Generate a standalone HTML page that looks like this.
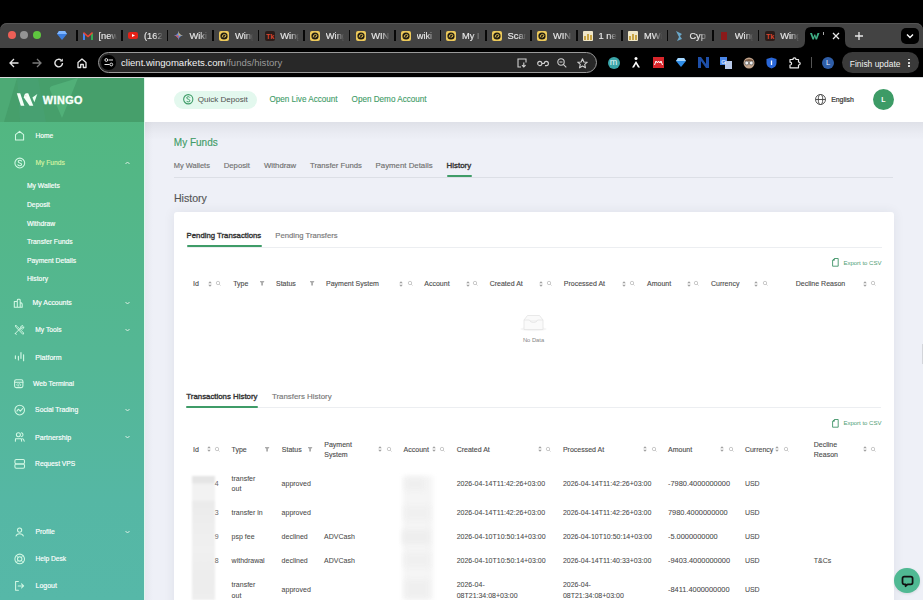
<!DOCTYPE html>
<html><head><meta charset="utf-8"><title>Wingo</title><style>
*{margin:0;padding:0;box-sizing:border-box}
html,body{width:923px;height:600px;overflow:hidden;background:#000;font-family:"Liberation Sans",sans-serif}
.a{position:absolute;white-space:nowrap}
svg.a{overflow:visible}
</style></head><body>
<div class="a" style="left:0px;top:0px;width:923px;height:77px;background:#000"></div>
<div class="a" style="left:0px;top:22.5px;width:923px;height:25.5px;background:#434343;border-radius:7px 7px 0 0;box-shadow:inset 0 1px 0 #555"></div>
<div class="a" style="left:7.9px;top:31.199999999999996px;width:8.2px;height:8.2px;border-radius:50%;background:#ee5f57"></div>
<div class="a" style="left:20.299999999999997px;top:31.199999999999996px;width:8.2px;height:8.2px;border-radius:50%;background:#939393"></div>
<div class="a" style="left:32.9px;top:31.199999999999996px;width:8.2px;height:8.2px;border-radius:50%;background:#5fc63f"></div>
<svg class="a" style="left:57px;top:31px;" width="10" height="9" viewBox="0 0 10 9"><path d="M2 0 L8 0 L10 3 L5 9 L0 3 Z" fill="#3d7fe0"/><path d="M2 0 L8 0 L10 3 L0 3Z" fill="#7fb6ff"/></svg>
<div class="a" style="left:75.9px;top:30.3px;width:1.7px;height:10.6px;background:#080808"></div>
<svg class="a" style="left:82.80000000000001px;top:31.6px;" width="10" height="8" viewBox="0 0 10 8"><path d="M0 1 L0 8 L2 8 L2 3 L5 5.5 L8 3 L8 8 L10 8 L10 1 L9 0 L5 3.5 L1 0Z" fill="#ea4335"/><path d="M0 1 L0 8 L2 8 L2 3Z" fill="#4285f4"/><path d="M10 1 L10 8 L8 8 L8 3Z" fill="#34a853"/></svg>
<div class="a" style="left:98.5px;top:30.8px;width:18.5px;overflow:hidden;font-size:9.3px;line-height:11px;color:#e8e8e8;-webkit-text-stroke:.15px #e8e8e8;-webkit-mask-image:linear-gradient(90deg,#000 55%,transparent 100%)">[new</div>
<div class="a" style="left:121.4px;top:30.3px;width:1.7px;height:10.6px;background:#080808"></div>
<svg class="a" style="left:128.25px;top:32.1px;" width="10" height="7" viewBox="0 0 10 7"><rect width="10" height="7" rx="2" fill="#e62117"/><path d="M4 2 L7 3.5 L4 5Z" fill="#fff"/></svg>
<div class="a" style="left:144.0px;top:30.8px;width:18.5px;overflow:hidden;font-size:9.3px;line-height:11px;color:#e8e8e8;-webkit-text-stroke:.15px #e8e8e8;-webkit-mask-image:linear-gradient(90deg,#000 55%,transparent 100%)">(162</div>
<div class="a" style="left:166.8px;top:30.3px;width:1.7px;height:10.6px;background:#080808"></div>
<svg class="a" style="left:174.20000000000002px;top:31.1px;" width="9" height="9" viewBox="0 0 9 9"><path d="M4.5 0 Q5 4 9 4.5 Q5 5 4.5 9 Q4 5 0 4.5 Q4 4 4.5 0Z" fill="#5b8def"/><path d="M4.5 0 Q5 4 9 4.5 L4.5 4.5Z" fill="#e0b14b"/><path d="M0 4.5 Q4 5 4.5 9 L4.5 4.5Z" fill="#d9544d"/></svg>
<div class="a" style="left:189.4px;top:30.8px;width:18.5px;overflow:hidden;font-size:9.3px;line-height:11px;color:#e8e8e8;-webkit-text-stroke:.15px #e8e8e8;-webkit-mask-image:linear-gradient(90deg,#000 55%,transparent 100%)">Wiki</div>
<div class="a" style="left:212.3px;top:30.3px;width:1.7px;height:10.6px;background:#080808"></div>
<svg class="a" style="left:219.15000000000003px;top:30.6px;" width="10" height="10" viewBox="0 0 10 10"><rect width="10" height="10" rx="2" fill="#ecc95a"/><circle cx="5" cy="5" r="3.6" fill="#1e1a10"/><path d="M3.2 6.3 Q3 3.6 5.4 3.4 Q7 3.4 6.9 4.9 Q6.6 6.4 4.6 6.2" fill="none" stroke="#ecc95a" stroke-width=".9"/></svg>
<div class="a" style="left:234.9px;top:30.8px;width:18.5px;overflow:hidden;font-size:9.3px;line-height:11px;color:#e8e8e8;-webkit-text-stroke:.15px #e8e8e8;-webkit-mask-image:linear-gradient(90deg,#000 55%,transparent 100%)">Wing</div>
<div class="a" style="left:257.7px;top:30.3px;width:1.7px;height:10.6px;background:#080808"></div>
<svg class="a" style="left:264.6px;top:30.6px;" width="10" height="10" viewBox="0 0 10 10"><rect width="10" height="10" rx="2" fill="#2a1d1a"/><text x="1" y="7.8" font-size="7" font-family="Liberation Sans" font-weight="bold" fill="#d9452f">Tk</text></svg>
<div class="a" style="left:280.3px;top:30.8px;width:18.5px;overflow:hidden;font-size:9.3px;line-height:11px;color:#e8e8e8;-webkit-text-stroke:.15px #e8e8e8;-webkit-mask-image:linear-gradient(90deg,#000 55%,transparent 100%)">Wing</div>
<div class="a" style="left:303.1px;top:30.3px;width:1.7px;height:10.6px;background:#080808"></div>
<svg class="a" style="left:310.04999999999995px;top:30.6px;" width="10" height="10" viewBox="0 0 10 10"><rect width="10" height="10" rx="2" fill="#ecc95a"/><circle cx="5" cy="5" r="3.6" fill="#1e1a10"/><path d="M3.2 6.3 Q3 3.6 5.4 3.4 Q7 3.4 6.9 4.9 Q6.6 6.4 4.6 6.2" fill="none" stroke="#ecc95a" stroke-width=".9"/></svg>
<div class="a" style="left:325.8px;top:30.8px;width:18.5px;overflow:hidden;font-size:9.3px;line-height:11px;color:#e8e8e8;-webkit-text-stroke:.15px #e8e8e8;-webkit-mask-image:linear-gradient(90deg,#000 55%,transparent 100%)">Wing</div>
<div class="a" style="left:348.6px;top:30.3px;width:1.7px;height:10.6px;background:#080808"></div>
<svg class="a" style="left:355.5px;top:30.6px;" width="10" height="10" viewBox="0 0 10 10"><rect width="10" height="10" rx="2" fill="#ecc95a"/><circle cx="5" cy="5" r="3.6" fill="#1e1a10"/><path d="M3.2 6.3 Q3 3.6 5.4 3.4 Q7 3.4 6.9 4.9 Q6.6 6.4 4.6 6.2" fill="none" stroke="#ecc95a" stroke-width=".9"/></svg>
<div class="a" style="left:371.2px;top:30.8px;width:18.5px;overflow:hidden;font-size:9.3px;line-height:11px;color:#e8e8e8;-webkit-text-stroke:.15px #e8e8e8;-webkit-mask-image:linear-gradient(90deg,#000 55%,transparent 100%)">WIN</div>
<div class="a" style="left:394.1px;top:30.3px;width:1.7px;height:10.6px;background:#080808"></div>
<svg class="a" style="left:400.95000000000005px;top:30.6px;" width="10" height="10" viewBox="0 0 10 10"><rect width="10" height="10" rx="2" fill="#ecc95a"/><circle cx="5" cy="5" r="3.6" fill="#1e1a10"/><path d="M3.2 6.3 Q3 3.6 5.4 3.4 Q7 3.4 6.9 4.9 Q6.6 6.4 4.6 6.2" fill="none" stroke="#ecc95a" stroke-width=".9"/></svg>
<div class="a" style="left:416.7px;top:30.8px;width:18.5px;overflow:hidden;font-size:9.3px;line-height:11px;color:#e8e8e8;-webkit-text-stroke:.15px #e8e8e8;-webkit-mask-image:linear-gradient(90deg,#000 55%,transparent 100%)">wiki</div>
<div class="a" style="left:439.5px;top:30.3px;width:1.7px;height:10.6px;background:#080808"></div>
<svg class="a" style="left:446.4px;top:30.6px;" width="10" height="10" viewBox="0 0 10 10"><rect width="10" height="10" rx="2" fill="#ecc95a"/><circle cx="5" cy="5" r="3.6" fill="#1e1a10"/><path d="M3.2 6.3 Q3 3.6 5.4 3.4 Q7 3.4 6.9 4.9 Q6.6 6.4 4.6 6.2" fill="none" stroke="#ecc95a" stroke-width=".9"/></svg>
<div class="a" style="left:462.1px;top:30.8px;width:18.5px;overflow:hidden;font-size:9.3px;line-height:11px;color:#e8e8e8;-webkit-text-stroke:.15px #e8e8e8;-webkit-mask-image:linear-gradient(90deg,#000 55%,transparent 100%)">My I</div>
<div class="a" style="left:485.0px;top:30.3px;width:1.7px;height:10.6px;background:#080808"></div>
<svg class="a" style="left:491.85px;top:30.6px;" width="10" height="10" viewBox="0 0 10 10"><rect width="10" height="10" rx="2" fill="#ecc95a"/><circle cx="5" cy="5" r="3.6" fill="#1e1a10"/><path d="M3.2 6.3 Q3 3.6 5.4 3.4 Q7 3.4 6.9 4.9 Q6.6 6.4 4.6 6.2" fill="none" stroke="#ecc95a" stroke-width=".9"/></svg>
<div class="a" style="left:507.6px;top:30.8px;width:18.5px;overflow:hidden;font-size:9.3px;line-height:11px;color:#e8e8e8;-webkit-text-stroke:.15px #e8e8e8;-webkit-mask-image:linear-gradient(90deg,#000 55%,transparent 100%)">Scar</div>
<div class="a" style="left:530.4px;top:30.3px;width:1.7px;height:10.6px;background:#080808"></div>
<svg class="a" style="left:537.3px;top:30.6px;" width="10" height="10" viewBox="0 0 10 10"><rect width="10" height="10" rx="2" fill="#ecc95a"/><circle cx="5" cy="5" r="3.6" fill="#1e1a10"/><path d="M3.2 6.3 Q3 3.6 5.4 3.4 Q7 3.4 6.9 4.9 Q6.6 6.4 4.6 6.2" fill="none" stroke="#ecc95a" stroke-width=".9"/></svg>
<div class="a" style="left:553.0px;top:30.8px;width:18.5px;overflow:hidden;font-size:9.3px;line-height:11px;color:#e8e8e8;-webkit-text-stroke:.15px #e8e8e8;-webkit-mask-image:linear-gradient(90deg,#000 55%,transparent 100%)">WIN</div>
<div class="a" style="left:575.9px;top:30.3px;width:1.7px;height:10.6px;background:#080808"></div>
<svg class="a" style="left:582.75px;top:30.6px;" width="10" height="10" viewBox="0 0 10 10"><rect width="10" height="10" rx="1" fill="#f0e7c8"/><path d="M1 9 L1 5 L3 5 L3 9 M4 9 L4 3 L6 3 L6 9 M7 9 L7 4 L9 4 L9 9" fill="#c9a545"/></svg>
<div class="a" style="left:598.5px;top:30.8px;width:18.5px;overflow:hidden;font-size:9.3px;line-height:11px;color:#e8e8e8;-webkit-text-stroke:.15px #e8e8e8;-webkit-mask-image:linear-gradient(90deg,#000 55%,transparent 100%)">1 ne</div>
<div class="a" style="left:621.3px;top:30.3px;width:1.7px;height:10.6px;background:#080808"></div>
<svg class="a" style="left:628.2px;top:30.6px;" width="10" height="10" viewBox="0 0 10 10"><rect width="10" height="10" rx="1" fill="#f0e7c8"/><path d="M1 9 L1 5 L3 5 L3 9 M4 9 L4 3 L6 3 L6 9 M7 9 L7 4 L9 4 L9 9" fill="#c9a545"/></svg>
<div class="a" style="left:643.9px;top:30.8px;width:18.5px;overflow:hidden;font-size:9.3px;line-height:11px;color:#e8e8e8;-webkit-text-stroke:.15px #e8e8e8;-webkit-mask-image:linear-gradient(90deg,#000 55%,transparent 100%)">MWi</div>
<div class="a" style="left:666.8px;top:30.3px;width:1.7px;height:10.6px;background:#080808"></div>
<svg class="a" style="left:674.65px;top:30.6px;" width="8" height="10" viewBox="0 0 8 10"><path d="M1 0 L7 3 L5 5 L7 8 L2 10 L4 6Z" fill="#6aa7c9"/></svg>
<div class="a" style="left:689.4px;top:30.8px;width:18.5px;overflow:hidden;font-size:9.3px;line-height:11px;color:#e8e8e8;-webkit-text-stroke:.15px #e8e8e8;-webkit-mask-image:linear-gradient(90deg,#000 55%,transparent 100%)">Cyp</div>
<div class="a" style="left:712.2px;top:30.3px;width:1.7px;height:10.6px;background:#080808"></div>
<svg class="a" style="left:720.1px;top:30.6px;" width="8" height="10" viewBox="0 0 8 10"><path d="M1 1 L7 1 L7 9 L1 9Z" fill="#8b1a1a"/></svg>
<div class="a" style="left:734.8px;top:30.8px;width:18.5px;overflow:hidden;font-size:9.3px;line-height:11px;color:#e8e8e8;-webkit-text-stroke:.15px #e8e8e8;-webkit-mask-image:linear-gradient(90deg,#000 55%,transparent 100%)">Wing</div>
<div class="a" style="left:757.6px;top:30.3px;width:1.7px;height:10.6px;background:#080808"></div>
<svg class="a" style="left:764.55px;top:30.6px;" width="10" height="10" viewBox="0 0 10 10"><rect width="10" height="10" rx="2" fill="#2a1d1a"/><text x="1" y="7.8" font-size="7" font-family="Liberation Sans" font-weight="bold" fill="#d9452f">Tk</text></svg>
<div class="a" style="left:780.2px;top:30.8px;width:18.5px;overflow:hidden;font-size:9.3px;line-height:11px;color:#e8e8e8;-webkit-text-stroke:.15px #e8e8e8;-webkit-mask-image:linear-gradient(90deg,#000 55%,transparent 100%)">Wing</div>
<div class="a" style="left:798px;top:27px;width:54px;height:21px;"><svg width="54" height="21" viewBox="0 0 54 21" style="position:absolute;left:0;top:0"><path d="M0 21 Q7 21 7 14 L7 6 Q7 0 13 0 L41 0 Q47 0 47 6 L47 14 Q47 21 54 21Z" fill="#000"/></svg></div>
<svg class="a" style="left:810px;top:33px;" width="9.5" height="6.5" viewBox="0 0 9.5 6.5"><path d="M0 0 L2 0 L3.4 4.2 L4.2 1.6 L5.3 1.6 L6.1 4.2 L7.5 0 L9.5 0 L7 6.5 L5.6 6.5 L4.75 3.6 L3.9 6.5 L2.5 6.5Z" fill="#3fae85"/></svg>
<div class="a" style="left:823px;top:32px;width:1px;height:3px;background:#aaa"></div>
<svg class="a" style="left:832px;top:31.5px;" width="8" height="8" viewBox="0 0 8 8"><path d="M1 1 L7 7 M7 1 L1 7" stroke="#e8e8e8" stroke-width="1.3"/></svg>
<svg class="a" style="left:854px;top:30.5px;" width="10" height="10" viewBox="0 0 10 10"><path d="M5 1 L5 9 M1 5 L9 5" stroke="#e8e8e8" stroke-width="1.3"/></svg>
<div class="a" style="left:901px;top:28px;width:18px;height:16px;background:#000;border-radius:5px"></div>
<svg class="a" style="left:906px;top:33px;" width="8" height="6" viewBox="0 0 8 6"><path d="M1 1.5 L4 4.5 L7 1.5" fill="none" stroke="#fff" stroke-width="1.4"/></svg>
<svg class="a" style="left:9px;top:58px;" width="10" height="10" viewBox="0 0 10 10"><path d="M9.5 5 L1 5 M5 1 L1 5 L5 9" fill="none" stroke="#e6e6e6" stroke-width="1.3"/></svg>
<svg class="a" style="left:32px;top:58px;" width="10" height="10" viewBox="0 0 10 10"><path d="M0.5 5 L9 5 M5 1 L9 5 L5 9" fill="none" stroke="#7a7a7a" stroke-width="1.3"/></svg>
<svg class="a" style="left:54px;top:58px;" width="10" height="10" viewBox="0 0 10 10"><path d="M8.5 5 A3.8 3.8 0 1 1 7.2 2.2" fill="none" stroke="#e6e6e6" stroke-width="1.4"/><path d="M8.8 0.6 L8.8 3.6 L5.8 3.6Z" fill="#e6e6e6"/></svg>
<svg class="a" style="left:77px;top:57.5px;" width="10" height="10" viewBox="0 0 10 10"><path d="M1 9.5 L1 4.5 L5 1 L9 4.5 L9 9.5 L6.3 9.5 L6.3 6.5 L3.7 6.5 L3.7 9.5Z" fill="none" stroke="#e6e6e6" stroke-width="1.3" stroke-linejoin="round"/></svg>
<div class="a" style="left:98px;top:52px;width:499px;height:21px;border:1px solid #9a9a9a;border-radius:11px;background:#282828"></div>
<div class="a" style="left:101.3px;top:55.2px;width:14.4px;height:14.4px;border-radius:50%;background:#000"></div>
<svg class="a" style="left:104px;top:58px;" width="10" height="9" viewBox="0 0 10 9"><circle cx="2.3" cy="2" r="1.4" fill="none" stroke="#e6e6e6" stroke-width="1"/><path d="M4.5 2 L9 2 M0.5 6.5 L5.5 6.5" stroke="#e6e6e6" stroke-width="1"/><circle cx="7.3" cy="6.5" r="1.4" fill="none" stroke="#e6e6e6" stroke-width="1"/></svg>
<div class="a" style="left:121.00px;top:58.12px;font-size:9.55px;line-height:9.55px;color:#f2f2f2;font-weight:normal;"><span style="color:#f2f2f2">client.wingomarkets.com</span><span style="color:#9a9a9a">/funds/history</span></div>
<svg class="a" style="left:517px;top:58px;" width="10" height="10" viewBox="0 0 10 10"><path d="M4 9 L1 9 L1 1 L9 1 L9 4.5" fill="none" stroke="#cfcfcf" stroke-width="1.1"/><path d="M6.8 4.5 L6.8 9 M5 7.2 L6.8 9 L8.6 7.2" fill="none" stroke="#cfcfcf" stroke-width="1.1"/></svg>
<svg class="a" style="left:536.5px;top:59.5px;" width="12" height="7" viewBox="0 0 12 7"><circle cx="2.8" cy="3.5" r="2.1" fill="none" stroke="#cfcfcf" stroke-width="1.1"/><path d="M4.9 3.5 L7.2 3.5 Q7.2 1.4 9.3 1.4 Q11.4 1.4 11.4 3.5 Q11.4 5.6 9.3 5.6 L8 5.6" fill="none" stroke="#cfcfcf" stroke-width="1.1"/></svg>
<svg class="a" style="left:557px;top:58px;" width="10" height="10" viewBox="0 0 10 10"><circle cx="4" cy="4" r="3.2" fill="none" stroke="#cfcfcf" stroke-width="1.1"/><path d="M6.3 6.3 L9.3 9.3 M2.5 4 L5.5 4" stroke="#cfcfcf" stroke-width="1.1"/></svg>
<svg class="a" style="left:577px;top:57.5px;" width="11" height="11" viewBox="0 0 11 11"><path d="M5.5 0.8 L6.9 4 L10.3 4.2 L7.7 6.4 L8.5 9.8 L5.5 8 L2.5 9.8 L3.3 6.4 L0.7 4.2 L4.1 4Z" fill="none" stroke="#cfcfcf" stroke-width="1.1" stroke-linejoin="round"/></svg>
<div class="a" style="left:607.5px;top:56.8px;width:12px;height:12px;border-radius:50%;background:#3aa5a8;color:#e8f6f6;font-size:9px;line-height:11px;text-align:center">m</div>
<svg class="a" style="left:631px;top:57px;" width="10" height="11" viewBox="0 0 10 11"><circle cx="5" cy="1.6" r="1.5" fill="#fff"/><path d="M5 4 L1 10.5 L3 10.5 L5 7 L7 10.5 L9 10.5Z" fill="#fff"/></svg>
<svg class="a" style="left:653px;top:57px;" width="11" height="11" viewBox="0 0 11 11"><rect width="11" height="11" fill="#d8262b"/><path d="M1.5 8 L3 4 L4.5 6 L5.5 4 L7 6 L8 4 L9.5 8" fill="none" stroke="#fff" stroke-width="1"/></svg>
<svg class="a" style="left:676px;top:58px;" width="10" height="9" viewBox="0 0 10 9"><path d="M2 0 L8 0 L10 3 L5 9 L0 3 Z" fill="#2e8ce6"/><path d="M2 0 L8 0 L10 3 L0 3Z" fill="#a6d7ff"/></svg>
<svg class="a" style="left:698px;top:57px;" width="11" height="11" viewBox="0 0 11 11"><path d="M0 11 L0 0 L3 0 L8 7 L8 0 L11 0 L11 11 L8 11 L3 4 L3 11Z" fill="#1e4fa8"/></svg>
<svg class="a" style="left:720px;top:57px;" width="12" height="12" viewBox="0 0 12 12"><rect x="0" y="0" width="7" height="8" fill="#4a86e8"/><rect x="5" y="4" width="7" height="8" fill="#b8c8e8"/><text x="1.3" y="6.5" font-size="6" fill="#fff" font-family="Liberation Sans">G</text></svg>
<svg class="a" style="left:742.5px;top:57px;" width="12" height="12" viewBox="0 0 12 12"><circle cx="6" cy="6" r="5.5" fill="#c2a48c"/><circle cx="3.8" cy="6" r="2" fill="#eee" stroke="#555" stroke-width=".7"/><circle cx="8.2" cy="6" r="2" fill="#eee" stroke="#555" stroke-width=".7"/><path d="M1 4 Q6 0 11 4" fill="#7a5a44"/></svg>
<svg class="a" style="left:765.5px;top:56.5px;" width="11" height="12" viewBox="0 0 11 12"><path d="M5.5 0.5 L10.5 2 L10.5 6 Q10.5 10 5.5 11.5 Q0.5 10 0.5 6 L0.5 2Z" fill="#2a67d8"/><path d="M5.5 3.5 L5.5 8" stroke="#fff" stroke-width="1.3"/></svg>
<svg class="a" style="left:789px;top:57px;" width="12" height="12" viewBox="0 0 12 12"><path d="M1 2.5 L4 2.5 Q4 0.8 5.5 0.8 Q7 0.8 7 2.5 L9.5 2.5 L9.5 5 Q11.2 5 11.2 6.5 Q11.2 8 9.5 8 L9.5 10.8 L1 10.8 L1 8 Q2.6 8 2.6 6.6 Q2.6 5.2 1 5.2Z" fill="none" stroke="#eaeaea" stroke-width="1.2" stroke-linejoin="round"/></svg>
<div class="a" style="left:811px;top:57px;width:1px;height:11px;background:#555"></div>
<div class="a" style="left:822px;top:56.8px;width:12px;height:12px;border-radius:50%;background:#2f5ea8;color:#e8eef8;font-size:7.5px;line-height:12px;text-align:center">L</div>
<div class="a" style="left:842px;top:52.3px;width:77px;height:21px;background:#3a3a3a;border-radius:11px"></div>
<div class="a" style="left:849.80px;top:59.85px;font-size:8.45px;line-height:8.45px;color:#f0f0f0;font-weight:normal;">Finish update</div>
<div class="a" style="left:908.2px;top:58.75px;width:1.7px;height:1.7px;border-radius:50%;background:#eee"></div>
<div class="a" style="left:908.2px;top:61.95px;width:1.7px;height:1.7px;border-radius:50%;background:#eee"></div>
<div class="a" style="left:908.2px;top:65.15px;width:1.7px;height:1.7px;border-radius:50%;background:#eee"></div>
<div class="a" style="left:0px;top:77px;width:923px;height:523px;background:#eef0f7"></div>
<div class="a" style="left:0px;top:77px;width:923px;height:1px;background:#d8dadc"></div>
<div class="a" style="left:0px;top:78px;width:144px;height:522px;background:linear-gradient(180deg,#52b77e 0%,#53b786 20%,#54b795 54%,#55b7a4 81%,#56b8a8 100%)"></div>
<div class="a" style="left:0px;top:78px;width:144px;height:44px;background:#469f6b;overflow:hidden"></div>
<svg class="a" style="left:0px;top:78px;" width="144" height="44" viewBox="0 0 144 44"><path d="M0 0 L17 0 L4 44 L0 44Z" fill="#4fac78" opacity=".8"/><path d="M17 0 L38 0 L46 44 L20 44Z" fill="#48a274" opacity=".6"/><path d="M50 12 Q49 9 52 8 L78 0 L62 40Z" fill="#52b17a" opacity=".9"/></svg>
<svg class="a" style="left:0;top:0" width="60" height="120" viewBox="0 0 60 120"><path d="M16.8 93.3 L20.2 93.3 L24.4 105.7 L20.8 105.7Z" fill="#f4fff8"/><path d="M23.8 97.6 Q24.3 93.3 26.6 93.3 L28.2 93.3 L33.3 105.7 L29.6 105.7Z" fill="#f4fff8"/><path d="M25 95.5 Q25.8 94.5 26.6 95.5 L26.2 97Z" fill="#f0d8d8"/><path d="M32.4 97.4 L37.3 94 L34.4 102.3Z" fill="#e8fff2"/></svg>
<div class="a" style="left:42.80px;top:94.86px;font-size:10.8px;line-height:10.8px;color:#f8fffb;font-weight:bold;-webkit-text-stroke:.35px #f8fffb;letter-spacing:.45px">WINGO</div>
<svg class="a" style="left:0;top:0" width="144" height="600" viewBox="0 0 144 600"><g fill="none" stroke="#d2f8e4" stroke-width="1.05" stroke-linejoin="round" stroke-linecap="round"><path d="M15.5 140 L15.5 134.6 L19.6 131.3 L23.6 134.6 L23.6 140Z"/><circle cx="19.8" cy="163" r="4.9"/><path d="M21.6 161.1 Q21.2 160.2 19.8 160.2 Q18.2 160.2 18.2 161.5 Q18.2 162.5 19.8 162.9 Q21.6 163.3 21.6 164.5 Q21.6 165.8 19.8 165.8 Q18.3 165.8 17.9 164.8"/><path d="M14.3 307.2 L14.3 301.4 L17.3 301.4 L17.3 307.2 M17.3 301.4 L17.3 300.2 Q17.3 299.3 18.3 299.3 L19.2 299.3 Q20.2 299.3 20.2 300.2 L20.2 307.2 M20.2 302.6 Q22.2 302.6 22.2 304.6 L22.2 307.2 L14.3 307.2"/><path d="M15.6 325.8 Q16.8 325.4 17.4 326.6 L23.6 333 Q23.8 334.2 22.8 334.3 L16.6 327.8 Q15.4 327.2 15.6 325.8Z" stroke-width=".95"/><path d="M15.3 333.4 L20.8 327.9 M20.8 327.9 Q20.4 326.2 21.8 325.6 L22.6 325.5 L21.8 326.9 L22.6 327.6 L23.9 326.8 Q24 328.5 22.3 329.2 Q21.6 329.3 20.8 327.9 M15.3 333.4 Q15.3 334.5 16.3 334.4" stroke-width=".95"/><path d="M15.4 355.9 L15.4 358.6 M18.4 356.2 L18.4 360 M23.6 354.8 L23.6 360.8" stroke-width="1.1"/><rect x="20.1" y="352.1" width="1.7" height="7" rx=".8" fill="#a9e3cc" stroke="none"/><rect x="14.6" y="379.7" width="8.3" height="7.9" rx="1.6"/><path d="M14.6 382.3 L22.9 382.3"/><path d="M17.6 383.7 L16.6 384.9 L17.6 386 M19.9 383.7 L20.9 384.9 L19.9 386 M19.2 383.6 L18.4 386.1" stroke-width=".75"/><circle cx="19.7" cy="410.1" r="4.8"/><path d="M16.9 411.1 L18.4 409.2 L20.3 411.2 L22.6 408.6"/><circle cx="18.4" cy="434.7" r="2"/><path d="M21.4 432.8 Q23 433 23 434.7 Q23 436.3 21.6 436.6"/><path d="M15.4 441.3 L15.5 438.7 L21.4 438.7 L21.6 441.3 M22.6 438.7 Q23.6 438.9 24.2 441.2"/><rect x="14.9" y="459.5" width="9.6" height="4.4" rx="1.3"/><rect x="14.9" y="463.9" width="9.6" height="4.4" rx="1.3"/><circle cx="19.6" cy="530.1" r="2.1"/><path d="M16.1 535.9 Q16.6 533.7 19.6 533.7 Q22.6 533.7 23.3 535.9"/><circle cx="19.7" cy="558.9" r="4.8"/><circle cx="19.7" cy="558.9" r="2.2"/><path d="M16.4 555.6 L18.2 557.4 M23 555.6 L21.2 557.4 M16.4 562.2 L18.2 560.4 M23 562.2 L21.2 560.4" stroke-width=".8"/><path d="M18.4 581.4 L15.6 581.4 L15.6 590.2 L18.4 590.2"/><path d="M18.2 585.9 L23.6 585.9 M21.5 583.8 L23.6 585.9 L21.5 588"/></g></svg>
<div class="a" style="left:35.40px;top:133.37px;font-size:6.65px;line-height:6.65px;color:#ffffff;font-weight:normal;-webkit-text-stroke:.15px #fff">Home</div>
<div class="a" style="left:35.40px;top:159.83px;font-size:6.7px;line-height:6.7px;color:#d6f3a2;font-weight:normal;-webkit-text-stroke:.15px #d6f3a2">My Funds</div>
<svg class="a" style="left:124.8px;top:161px;" width="5" height="4" viewBox="0 0 5 4"><path d="M0.5 3 L2.5 1 L4.5 3" fill="none" stroke="#e6f2ea" stroke-width=".9"/></svg>
<div class="a" style="left:27.00px;top:183.49px;font-size:6.75px;line-height:6.75px;color:#ffffff;font-weight:normal;-webkit-text-stroke:.15px #fff">My Wallets</div>
<div class="a" style="left:27.00px;top:202.01px;font-size:6.75px;line-height:6.75px;color:#ffffff;font-weight:normal;-webkit-text-stroke:.15px #fff">Deposit</div>
<div class="a" style="left:27.00px;top:220.53px;font-size:6.75px;line-height:6.75px;color:#ffffff;font-weight:normal;-webkit-text-stroke:.15px #fff">Withdraw</div>
<div class="a" style="left:27.00px;top:239.05px;font-size:6.75px;line-height:6.75px;color:#ffffff;font-weight:normal;-webkit-text-stroke:.15px #fff">Transfer Funds</div>
<div class="a" style="left:27.00px;top:257.57px;font-size:6.75px;line-height:6.75px;color:#ffffff;font-weight:normal;-webkit-text-stroke:.15px #fff">Payment Details</div>
<div class="a" style="left:27.00px;top:276.09px;font-size:6.75px;line-height:6.75px;color:#ffffff;font-weight:normal;-webkit-text-stroke:.15px #fff">History</div>
<div class="a" style="left:32.50px;top:300.32px;font-size:6.95px;line-height:6.95px;color:#ffffff;font-weight:normal;-webkit-text-stroke:.15px #fff">My Accounts</div>
<svg class="a" style="left:124.8px;top:301px;" width="5" height="4" viewBox="0 0 5 4"><path d="M0.5 1 L2.5 3 L4.5 1" fill="none" stroke="#e6f2ea" stroke-width=".9"/></svg>
<div class="a" style="left:35.30px;top:327.13px;font-size:6.7px;line-height:6.7px;color:#ffffff;font-weight:normal;-webkit-text-stroke:.15px #fff">My Tools</div>
<svg class="a" style="left:124.8px;top:328px;" width="5" height="4" viewBox="0 0 5 4"><path d="M0.5 1 L2.5 3 L4.5 1" fill="none" stroke="#e6f2ea" stroke-width=".9"/></svg>
<div class="a" style="left:35.30px;top:353.83px;font-size:7.05px;line-height:7.05px;color:#ffffff;font-weight:normal;-webkit-text-stroke:.15px #fff">Platform</div>
<div class="a" style="left:33.00px;top:381.09px;font-size:6.75px;line-height:6.75px;color:#ffffff;font-weight:normal;-webkit-text-stroke:.15px #fff">Web Terminal</div>
<div class="a" style="left:35.10px;top:407.34px;font-size:6.8px;line-height:6.8px;color:#ffffff;font-weight:normal;-webkit-text-stroke:.15px #fff">Social Trading</div>
<svg class="a" style="left:124.8px;top:408px;" width="5" height="4" viewBox="0 0 5 4"><path d="M0.5 1 L2.5 3 L4.5 1" fill="none" stroke="#e6f2ea" stroke-width=".9"/></svg>
<div class="a" style="left:35.10px;top:434.03px;font-size:7.05px;line-height:7.05px;color:#ffffff;font-weight:normal;-webkit-text-stroke:.15px #fff">Partnership</div>
<svg class="a" style="left:124.8px;top:435px;" width="5" height="4" viewBox="0 0 5 4"><path d="M0.5 1 L2.5 3 L4.5 1" fill="none" stroke="#e6f2ea" stroke-width=".9"/></svg>
<div class="a" style="left:35.10px;top:460.93px;font-size:6.7px;line-height:6.7px;color:#ffffff;font-weight:normal;-webkit-text-stroke:.15px #fff">Request VPS</div>
<div class="a" style="left:35.50px;top:529.09px;font-size:6.75px;line-height:6.75px;color:#ffffff;font-weight:normal;-webkit-text-stroke:.15px #fff">Profile</div>
<svg class="a" style="left:124.8px;top:530px;" width="5" height="4" viewBox="0 0 5 4"><path d="M0.5 1 L2.5 3 L4.5 1" fill="none" stroke="#e6f2ea" stroke-width=".9"/></svg>
<div class="a" style="left:35.50px;top:556.07px;font-size:6.65px;line-height:6.65px;color:#ffffff;font-weight:normal;-webkit-text-stroke:.15px #fff">Help Desk</div>
<div class="a" style="left:35.50px;top:582.27px;font-size:7.0px;line-height:7.0px;color:#ffffff;font-weight:normal;-webkit-text-stroke:.15px #fff">Logout</div>
<div class="a" style="left:144px;top:122px;width:779px;height:18px;background:linear-gradient(180deg,rgba(30,30,40,.075) 0%,rgba(30,30,40,.05) 25%,rgba(30,30,40,.02) 65%,rgba(30,30,40,0) 100%)"></div>
<div class="a" style="left:144px;top:78px;width:779px;height:44px;background:#fff"></div>
<div class="a" style="left:144px;top:78px;width:1.2px;height:522px;background:rgba(222,246,236,.95)"></div>
<div class="a" style="left:145.2px;top:122px;width:8px;height:478px;background:linear-gradient(90deg,rgba(30,30,50,.04),rgba(30,30,50,0))"></div>
<div class="a" style="left:174px;top:91px;width:83px;height:17.5px;background:#e3f8ee;border-radius:9px"></div>
<svg class="a" style="left:182.8px;top:94px;" width="10.5" height="10.5" viewBox="0 0 10.5 10.5"><circle cx="5.25" cy="5.25" r="4.6" fill="none" stroke="#3f9c68" stroke-width="1.1"/><path d="M6.9 3.6 Q6.5 2.7 5.25 2.7 Q3.7 2.7 3.7 3.9 Q3.7 4.8 5.25 5.2 Q6.9 5.6 6.9 6.8 Q6.9 7.9 5.25 7.9 Q3.9 7.9 3.5 6.9" fill="none" stroke="#3f9c68" stroke-width="1"/></svg>
<div class="a" style="left:197.70px;top:96.19px;font-size:8.05px;line-height:8.05px;color:#505050;font-weight:normal;">Quick Deposit</div>
<div class="a" style="left:269.40px;top:96.10px;font-size:8.15px;line-height:8.15px;color:#3f9c68;font-weight:normal;-webkit-text-stroke:.12px #3f9c68">Open Live Account</div>
<div class="a" style="left:351.60px;top:96.10px;font-size:8.15px;line-height:8.15px;color:#3f9c68;font-weight:normal;-webkit-text-stroke:.12px #3f9c68">Open Demo Account</div>
<svg class="a" style="left:815.3px;top:94px;" width="11" height="11" viewBox="0 0 11 11"><circle cx="5.5" cy="5.5" r="5" fill="none" stroke="#444" stroke-width=".9"/><ellipse cx="5.5" cy="5.5" rx="2.2" ry="5" fill="none" stroke="#444" stroke-width=".9"/><path d="M0.5 5.5 L10.5 5.5" stroke="#444" stroke-width=".9"/></svg>
<div class="a" style="left:831.20px;top:97.16px;font-size:6.9px;line-height:6.9px;color:#333;font-weight:normal;-webkit-text-stroke:.2px #333">English</div>
<div class="a" style="left:873px;top:89.2px;width:21px;height:21px;border-radius:50%;background:#3d9b66;color:#fff;font-size:7px;line-height:21px;text-align:center;font-weight:bold">L</div>
<div class="a" style="left:173.80px;top:137.73px;font-size:10.0px;line-height:10.0px;color:#3f9c68;font-weight:normal;-webkit-text-stroke:.15px #3f9c68">My Funds</div>
<div class="a" style="left:174px;top:177px;width:719px;height:1px;background:#dcdfe6"></div>
<div class="a" style="left:173.80px;top:162.00px;font-size:7.44px;line-height:7.44px;color:#707070;font-weight:normal;-webkit-text-stroke:.15px #707070">My Wallets</div>
<div class="a" style="left:223.70px;top:161.73px;font-size:7.76px;line-height:7.76px;color:#707070;font-weight:normal;-webkit-text-stroke:.15px #707070">Deposit</div>
<div class="a" style="left:263.90px;top:161.74px;font-size:7.75px;line-height:7.75px;color:#707070;font-weight:normal;-webkit-text-stroke:.15px #707070">Withdraw</div>
<div class="a" style="left:310.10px;top:161.78px;font-size:7.7px;line-height:7.7px;color:#707070;font-weight:normal;-webkit-text-stroke:.15px #707070">Transfer Funds</div>
<div class="a" style="left:375.60px;top:161.67px;font-size:7.83px;line-height:7.83px;color:#707070;font-weight:normal;-webkit-text-stroke:.15px #707070">Payment Details</div>
<div class="a" style="left:446.60px;top:161.61px;font-size:7.9px;line-height:7.9px;color:#333;font-weight:normal;-webkit-text-stroke:.35px #333">History</div>
<div class="a" style="left:446.6px;top:174.6px;width:25px;height:2.2px;background:#3f9c68;border-radius:1px"></div>
<div class="a" style="left:173.90px;top:193.43px;font-size:10.6px;line-height:10.6px;color:#555;font-weight:normal;-webkit-text-stroke:.15px #555">History</div>
<div class="a" style="left:173.5px;top:212.3px;width:720.5px;height:400px;background:#fff;border-radius:3px;box-shadow:0 0 12px rgba(40,45,60,.08)"></div>
<div class="a" style="left:186.6px;top:246.8px;width:695px;height:1px;background:#eceef1"></div>
<div class="a" style="left:186.60px;top:232.04px;font-size:7.75px;line-height:7.75px;color:#333;font-weight:normal;-webkit-text-stroke:.35px #333">Pending Transactions</div>
<div class="a" style="left:275.30px;top:232.08px;font-size:7.7px;line-height:7.7px;color:#777;font-weight:normal;-webkit-text-stroke:.15px #777">Pending Transfers</div>
<div class="a" style="left:186.6px;top:245.2px;width:75px;height:2.2px;background:#3f9c68;border-radius:1px"></div>
<svg class="a" style="left:832.3px;top:258.4px;" width="7" height="9" viewBox="0 0 7 9"><path d="M2.4 0.5 L6.2 0.5 L6.2 8.2 L0.6 8.2 L0.6 2.3Z" fill="none" stroke="#3f9468" stroke-width=".9" stroke-linejoin="round"/><path d="M0.6 2.3 L2.4 2.3 L2.4 0.5" fill="#3f9468" stroke="#3f9468" stroke-width=".7"/></svg>
<div class="a" style="left:843.40px;top:259.62px;font-size:6.0px;line-height:6.0px;color:#4f9d74;font-weight:normal;">Export to CSV</div>
<div class="a" style="left:193.00px;top:280.37px;font-size:7.0px;line-height:7.0px;color:#4d4d4d;font-weight:normal;-webkit-text-stroke:.12px #4d4d4d">Id</div>
<svg class="a" style="left:208.4px;top:280.5px;" width="4" height="6.4" viewBox="0 0 4 6.4"><path d="M0.2 2.3 L2 0.2 L3.8 2.3Z M0.2 3.7 L2 5.8 L3.8 3.7Z" fill="#a0a0a0"/></svg>
<svg class="a" style="left:216.20000000000002px;top:280.8px;" width="5" height="5" viewBox="0 0 5 5"><circle cx="2" cy="2" r="1.7" fill="none" stroke="#bdbdbd" stroke-width=".8"/><path d="M3.2 3.2 L4.5 4.5" stroke="#bdbdbd" stroke-width=".8"/></svg>
<div class="a" style="left:233.20px;top:280.37px;font-size:7.0px;line-height:7.0px;color:#4d4d4d;font-weight:normal;-webkit-text-stroke:.12px #4d4d4d">Type</div>
<svg class="a" style="left:259.7px;top:280.90000000000003px;" width="4.2" height="4.6" viewBox="0 0 4.2 4.6"><path d="M0 0 L4.2 0 L4.2 0.8 L3 2 L3 4.4 L1.2 4.4 L1.2 2 L0 0.8Z" fill="#acacac"/></svg>
<div class="a" style="left:276.00px;top:280.37px;font-size:7.0px;line-height:7.0px;color:#4d4d4d;font-weight:normal;-webkit-text-stroke:.12px #4d4d4d">Status</div>
<svg class="a" style="left:309.9px;top:280.90000000000003px;" width="4.2" height="4.6" viewBox="0 0 4.2 4.6"><path d="M0 0 L4.2 0 L4.2 0.8 L3 2 L3 4.4 L1.2 4.4 L1.2 2 L0 0.8Z" fill="#acacac"/></svg>
<div class="a" style="left:326.00px;top:280.37px;font-size:7.0px;line-height:7.0px;color:#4d4d4d;font-weight:normal;-webkit-text-stroke:.12px #4d4d4d">Payment System</div>
<svg class="a" style="left:399.3px;top:280.5px;" width="4" height="6.4" viewBox="0 0 4 6.4"><path d="M0.2 2.3 L2 0.2 L3.8 2.3Z M0.2 3.7 L2 5.8 L3.8 3.7Z" fill="#a0a0a0"/></svg>
<svg class="a" style="left:407.7px;top:280.8px;" width="5" height="5" viewBox="0 0 5 5"><circle cx="2" cy="2" r="1.7" fill="none" stroke="#bdbdbd" stroke-width=".8"/><path d="M3.2 3.2 L4.5 4.5" stroke="#bdbdbd" stroke-width=".8"/></svg>
<div class="a" style="left:424.30px;top:280.37px;font-size:7.0px;line-height:7.0px;color:#4d4d4d;font-weight:normal;-webkit-text-stroke:.12px #4d4d4d">Account</div>
<svg class="a" style="left:465.7px;top:280.5px;" width="4" height="6.4" viewBox="0 0 4 6.4"><path d="M0.2 2.3 L2 0.2 L3.8 2.3Z M0.2 3.7 L2 5.8 L3.8 3.7Z" fill="#a0a0a0"/></svg>
<svg class="a" style="left:473.3px;top:280.8px;" width="5" height="5" viewBox="0 0 5 5"><circle cx="2" cy="2" r="1.7" fill="none" stroke="#bdbdbd" stroke-width=".8"/><path d="M3.2 3.2 L4.5 4.5" stroke="#bdbdbd" stroke-width=".8"/></svg>
<div class="a" style="left:489.70px;top:280.37px;font-size:7.0px;line-height:7.0px;color:#4d4d4d;font-weight:normal;-webkit-text-stroke:.12px #4d4d4d">Created At</div>
<svg class="a" style="left:539.2px;top:280.5px;" width="4" height="6.4" viewBox="0 0 4 6.4"><path d="M0.2 2.3 L2 0.2 L3.8 2.3Z M0.2 3.7 L2 5.8 L3.8 3.7Z" fill="#a0a0a0"/></svg>
<svg class="a" style="left:547.3px;top:280.8px;" width="5" height="5" viewBox="0 0 5 5"><circle cx="2" cy="2" r="1.7" fill="none" stroke="#bdbdbd" stroke-width=".8"/><path d="M3.2 3.2 L4.5 4.5" stroke="#bdbdbd" stroke-width=".8"/></svg>
<div class="a" style="left:563.80px;top:280.37px;font-size:7.0px;line-height:7.0px;color:#4d4d4d;font-weight:normal;-webkit-text-stroke:.12px #4d4d4d">Processed At</div>
<svg class="a" style="left:622.3px;top:280.5px;" width="4" height="6.4" viewBox="0 0 4 6.4"><path d="M0.2 2.3 L2 0.2 L3.8 2.3Z M0.2 3.7 L2 5.8 L3.8 3.7Z" fill="#a0a0a0"/></svg>
<svg class="a" style="left:630.4px;top:280.8px;" width="5" height="5" viewBox="0 0 5 5"><circle cx="2" cy="2" r="1.7" fill="none" stroke="#bdbdbd" stroke-width=".8"/><path d="M3.2 3.2 L4.5 4.5" stroke="#bdbdbd" stroke-width=".8"/></svg>
<div class="a" style="left:647.00px;top:280.37px;font-size:7.0px;line-height:7.0px;color:#4d4d4d;font-weight:normal;-webkit-text-stroke:.12px #4d4d4d">Amount</div>
<svg class="a" style="left:686.5px;top:280.5px;" width="4" height="6.4" viewBox="0 0 4 6.4"><path d="M0.2 2.3 L2 0.2 L3.8 2.3Z M0.2 3.7 L2 5.8 L3.8 3.7Z" fill="#a0a0a0"/></svg>
<svg class="a" style="left:694.0999999999999px;top:280.8px;" width="5" height="5" viewBox="0 0 5 5"><circle cx="2" cy="2" r="1.7" fill="none" stroke="#bdbdbd" stroke-width=".8"/><path d="M3.2 3.2 L4.5 4.5" stroke="#bdbdbd" stroke-width=".8"/></svg>
<div class="a" style="left:711.00px;top:280.37px;font-size:7.0px;line-height:7.0px;color:#4d4d4d;font-weight:normal;-webkit-text-stroke:.12px #4d4d4d">Currency</div>
<svg class="a" style="left:754.3px;top:280.5px;" width="4" height="6.4" viewBox="0 0 4 6.4"><path d="M0.2 2.3 L2 0.2 L3.8 2.3Z M0.2 3.7 L2 5.8 L3.8 3.7Z" fill="#a0a0a0"/></svg>
<svg class="a" style="left:762.5999999999999px;top:280.8px;" width="5" height="5" viewBox="0 0 5 5"><circle cx="2" cy="2" r="1.7" fill="none" stroke="#bdbdbd" stroke-width=".8"/><path d="M3.2 3.2 L4.5 4.5" stroke="#bdbdbd" stroke-width=".8"/></svg>
<div class="a" style="left:795.80px;top:280.37px;font-size:7.0px;line-height:7.0px;color:#4d4d4d;font-weight:normal;-webkit-text-stroke:.12px #4d4d4d">Decline Reason</div>
<svg class="a" style="left:863.4px;top:280.5px;" width="4" height="6.4" viewBox="0 0 4 6.4"><path d="M0.2 2.3 L2 0.2 L3.8 2.3Z M0.2 3.7 L2 5.8 L3.8 3.7Z" fill="#a0a0a0"/></svg>
<svg class="a" style="left:871.0px;top:280.8px;" width="5" height="5" viewBox="0 0 5 5"><circle cx="2" cy="2" r="1.7" fill="none" stroke="#bdbdbd" stroke-width=".8"/><path d="M3.2 3.2 L4.5 4.5" stroke="#bdbdbd" stroke-width=".8"/></svg>
<svg class="a" style="left:519px;top:313px;" width="29" height="19" viewBox="0 0 29 19"><ellipse cx="14.5" cy="16" rx="13" ry="2.2" fill="#f5f5f5"/><path d="M5 7 L8.5 2.5 L20.5 2.5 L24 7 L24 16.5 L5 16.5Z" fill="#fafafa" stroke="#e3e3e3" stroke-width=".8"/><path d="M5 7 L10.5 7 Q11 9.5 14.5 9.5 Q18 9.5 18.5 7 L24 7" fill="#f3f3f3" stroke="#e3e3e3" stroke-width=".8"/></svg>
<div class="a" style="left:522.90px;top:337.68px;font-size:5.81px;line-height:5.81px;color:#858585;font-weight:normal;">No Data</div>
<div class="a" style="left:186.3px;top:407.4px;width:695px;height:1px;background:#eceef1"></div>
<div class="a" style="left:186.30px;top:392.85px;font-size:7.85px;line-height:7.85px;color:#333;font-weight:normal;-webkit-text-stroke:.35px #333">Transactions History</div>
<div class="a" style="left:271.90px;top:392.81px;font-size:7.9px;line-height:7.9px;color:#777;font-weight:normal;-webkit-text-stroke:.15px #777">Transfers History</div>
<div class="a" style="left:186.3px;top:405.8px;width:72px;height:2.2px;background:#3f9c68;border-radius:1px"></div>
<svg class="a" style="left:832.3px;top:418.9px;" width="7" height="9" viewBox="0 0 7 9"><path d="M2.4 0.5 L6.2 0.5 L6.2 8.2 L0.6 8.2 L0.6 2.3Z" fill="none" stroke="#3f9468" stroke-width=".9" stroke-linejoin="round"/><path d="M0.6 2.3 L2.4 2.3 L2.4 0.5" fill="#3f9468" stroke="#3f9468" stroke-width=".7"/></svg>
<div class="a" style="left:843.40px;top:420.12px;font-size:6.0px;line-height:6.0px;color:#4f9d74;font-weight:normal;">Export to CSV</div>
<div class="a" style="left:193.00px;top:446.07px;font-size:7.0px;line-height:7.0px;color:#4d4d4d;font-weight:normal;-webkit-text-stroke:.12px #4d4d4d">Id</div>
<svg class="a" style="left:206.5px;top:446.2px;" width="4" height="6.4" viewBox="0 0 4 6.4"><path d="M0.2 2.3 L2 0.2 L3.8 2.3Z M0.2 3.7 L2 5.8 L3.8 3.7Z" fill="#a0a0a0"/></svg>
<svg class="a" style="left:214.70000000000002px;top:446.5px;" width="5" height="5" viewBox="0 0 5 5"><circle cx="2" cy="2" r="1.7" fill="none" stroke="#bdbdbd" stroke-width=".8"/><path d="M3.2 3.2 L4.5 4.5" stroke="#bdbdbd" stroke-width=".8"/></svg>
<div class="a" style="left:231.50px;top:446.07px;font-size:7.0px;line-height:7.0px;color:#4d4d4d;font-weight:normal;-webkit-text-stroke:.12px #4d4d4d">Type</div>
<svg class="a" style="left:265.2px;top:446.6px;" width="4.2" height="4.6" viewBox="0 0 4.2 4.6"><path d="M0 0 L4.2 0 L4.2 0.8 L3 2 L3 4.4 L1.2 4.4 L1.2 2 L0 0.8Z" fill="#acacac"/></svg>
<div class="a" style="left:281.80px;top:446.07px;font-size:7.0px;line-height:7.0px;color:#4d4d4d;font-weight:normal;-webkit-text-stroke:.12px #4d4d4d">Status</div>
<svg class="a" style="left:308.09999999999997px;top:446.6px;" width="4.2" height="4.6" viewBox="0 0 4.2 4.6"><path d="M0 0 L4.2 0 L4.2 0.8 L3 2 L3 4.4 L1.2 4.4 L1.2 2 L0 0.8Z" fill="#acacac"/></svg>
<div class="a" style="left:324.30px;top:440.87px;font-size:7.0px;line-height:7.0px;color:#4d4d4d;font-weight:normal;-webkit-text-stroke:.12px #4d4d4d">Payment</div>
<div class="a" style="left:324.30px;top:451.37px;font-size:7.0px;line-height:7.0px;color:#4d4d4d;font-weight:normal;-webkit-text-stroke:.12px #4d4d4d">System</div>
<svg class="a" style="left:378.2px;top:446.2px;" width="4" height="6.4" viewBox="0 0 4 6.4"><path d="M0.2 2.3 L2 0.2 L3.8 2.3Z M0.2 3.7 L2 5.8 L3.8 3.7Z" fill="#a0a0a0"/></svg>
<svg class="a" style="left:387.1px;top:446.5px;" width="5" height="5" viewBox="0 0 5 5"><circle cx="2" cy="2" r="1.7" fill="none" stroke="#bdbdbd" stroke-width=".8"/><path d="M3.2 3.2 L4.5 4.5" stroke="#bdbdbd" stroke-width=".8"/></svg>
<div class="a" style="left:403.60px;top:446.07px;font-size:7.0px;line-height:7.0px;color:#4d4d4d;font-weight:normal;-webkit-text-stroke:.12px #4d4d4d">Account</div>
<svg class="a" style="left:432.2px;top:446.2px;" width="4" height="6.4" viewBox="0 0 4 6.4"><path d="M0.2 2.3 L2 0.2 L3.8 2.3Z M0.2 3.7 L2 5.8 L3.8 3.7Z" fill="#a0a0a0"/></svg>
<svg class="a" style="left:440.2px;top:446.5px;" width="5" height="5" viewBox="0 0 5 5"><circle cx="2" cy="2" r="1.7" fill="none" stroke="#bdbdbd" stroke-width=".8"/><path d="M3.2 3.2 L4.5 4.5" stroke="#bdbdbd" stroke-width=".8"/></svg>
<div class="a" style="left:456.70px;top:446.07px;font-size:7.0px;line-height:7.0px;color:#4d4d4d;font-weight:normal;-webkit-text-stroke:.12px #4d4d4d">Created At</div>
<svg class="a" style="left:538.1px;top:446.2px;" width="4" height="6.4" viewBox="0 0 4 6.4"><path d="M0.2 2.3 L2 0.2 L3.8 2.3Z M0.2 3.7 L2 5.8 L3.8 3.7Z" fill="#a0a0a0"/></svg>
<svg class="a" style="left:545.5px;top:446.5px;" width="5" height="5" viewBox="0 0 5 5"><circle cx="2" cy="2" r="1.7" fill="none" stroke="#bdbdbd" stroke-width=".8"/><path d="M3.2 3.2 L4.5 4.5" stroke="#bdbdbd" stroke-width=".8"/></svg>
<div class="a" style="left:562.90px;top:446.07px;font-size:7.0px;line-height:7.0px;color:#4d4d4d;font-weight:normal;-webkit-text-stroke:.12px #4d4d4d">Processed At</div>
<svg class="a" style="left:643.4px;top:446.2px;" width="4" height="6.4" viewBox="0 0 4 6.4"><path d="M0.2 2.3 L2 0.2 L3.8 2.3Z M0.2 3.7 L2 5.8 L3.8 3.7Z" fill="#a0a0a0"/></svg>
<svg class="a" style="left:651.6999999999999px;top:446.5px;" width="5" height="5" viewBox="0 0 5 5"><circle cx="2" cy="2" r="1.7" fill="none" stroke="#bdbdbd" stroke-width=".8"/><path d="M3.2 3.2 L4.5 4.5" stroke="#bdbdbd" stroke-width=".8"/></svg>
<div class="a" style="left:668.00px;top:446.07px;font-size:7.0px;line-height:7.0px;color:#4d4d4d;font-weight:normal;-webkit-text-stroke:.12px #4d4d4d">Amount</div>
<svg class="a" style="left:720.1px;top:446.2px;" width="4" height="6.4" viewBox="0 0 4 6.4"><path d="M0.2 2.3 L2 0.2 L3.8 2.3Z M0.2 3.7 L2 5.8 L3.8 3.7Z" fill="#a0a0a0"/></svg>
<svg class="a" style="left:728.5px;top:446.5px;" width="5" height="5" viewBox="0 0 5 5"><circle cx="2" cy="2" r="1.7" fill="none" stroke="#bdbdbd" stroke-width=".8"/><path d="M3.2 3.2 L4.5 4.5" stroke="#bdbdbd" stroke-width=".8"/></svg>
<div class="a" style="left:744.90px;top:446.07px;font-size:7.0px;line-height:7.0px;color:#4d4d4d;font-weight:normal;-webkit-text-stroke:.12px #4d4d4d">Currency</div>
<svg class="a" style="left:775.4px;top:446.2px;" width="4" height="6.4" viewBox="0 0 4 6.4"><path d="M0.2 2.3 L2 0.2 L3.8 2.3Z M0.2 3.7 L2 5.8 L3.8 3.7Z" fill="#a0a0a0"/></svg>
<svg class="a" style="left:783.8px;top:446.5px;" width="5" height="5" viewBox="0 0 5 5"><circle cx="2" cy="2" r="1.7" fill="none" stroke="#bdbdbd" stroke-width=".8"/><path d="M3.2 3.2 L4.5 4.5" stroke="#bdbdbd" stroke-width=".8"/></svg>
<div class="a" style="left:813.80px;top:440.87px;font-size:7.0px;line-height:7.0px;color:#4d4d4d;font-weight:normal;-webkit-text-stroke:.12px #4d4d4d">Decline</div>
<div class="a" style="left:813.80px;top:451.37px;font-size:7.0px;line-height:7.0px;color:#4d4d4d;font-weight:normal;-webkit-text-stroke:.12px #4d4d4d">Reason</div>
<svg class="a" style="left:863.1px;top:446.2px;" width="4" height="6.4" viewBox="0 0 4 6.4"><path d="M0.2 2.3 L2 0.2 L3.8 2.3Z M0.2 3.7 L2 5.8 L3.8 3.7Z" fill="#a0a0a0"/></svg>
<svg class="a" style="left:870.9px;top:446.5px;" width="5" height="5" viewBox="0 0 5 5"><circle cx="2" cy="2" r="1.7" fill="none" stroke="#bdbdbd" stroke-width=".8"/><path d="M3.2 3.2 L4.5 4.5" stroke="#bdbdbd" stroke-width=".8"/></svg>
<div class="a" style="left:191.5px;top:476px;width:23px;height:124px;background:linear-gradient(180deg,#e4e4e4 0%,#e6e6e6 5%,#f2f2f2 7%,#f2f2f2 19%,#ebebeb 21%,#eeeeee 40%,#f0f0f0 60%,#ededed 80%,#eeeeee 100%);filter:blur(.8px)"></div>
<div class="a" style="left:403px;top:476px;width:30px;height:124px;background:#f5f5f5;filter:blur(2px)"></div>
<div class="a" style="left:405px;top:478px;width:20px;height:12px;background:#efefef;filter:blur(2.5px)"></div>
<div class="a" style="left:404px;top:506px;width:26px;height:14px;background:#f0f0f0;filter:blur(2.5px)"></div>
<div class="a" style="left:402px;top:530px;width:28px;height:14px;background:#eeeeee;filter:blur(2.5px)"></div>
<div class="a" style="left:404px;top:553px;width:26px;height:14px;background:#f0f0f0;filter:blur(2.5px)"></div>
<div class="a" style="left:405px;top:580px;width:24px;height:18px;background:#efefef;filter:blur(2.5px)"></div>
<div class="a" style="left:214.80px;top:479.97px;font-size:7.0px;line-height:7.0px;color:#666;font-weight:normal;">4</div>
<div class="a" style="left:231.60px;top:474.67px;font-size:7.0px;line-height:7.0px;color:#4a4a4a;font-weight:normal;-webkit-text-stroke:.06px #4a4a4a">transfer</div>
<div class="a" style="left:231.60px;top:485.27px;font-size:7.0px;line-height:7.0px;color:#4a4a4a;font-weight:normal;-webkit-text-stroke:.06px #4a4a4a">out</div>
<div class="a" style="left:281.60px;top:479.97px;font-size:7.0px;line-height:7.0px;color:#4a4a4a;font-weight:normal;-webkit-text-stroke:.06px #4a4a4a">approved</div>
<div class="a" style="left:456.70px;top:479.97px;font-size:7.0px;line-height:7.0px;color:#4a4a4a;font-weight:normal;-webkit-text-stroke:.06px #4a4a4a">2026-04-14T11:42:26+03:00</div>
<div class="a" style="left:562.90px;top:479.97px;font-size:7.0px;line-height:7.0px;color:#4a4a4a;font-weight:normal;-webkit-text-stroke:.06px #4a4a4a">2026-04-14T11:42:26+03:00</div>
<div class="a" style="left:668.00px;top:479.64px;font-size:7.4px;line-height:7.4px;color:#4a4a4a;font-weight:normal;-webkit-text-stroke:.06px #4a4a4a">-7980.4000000000</div>
<div class="a" style="left:744.90px;top:479.97px;font-size:7.0px;line-height:7.0px;color:#4a4a4a;font-weight:normal;-webkit-text-stroke:.06px #4a4a4a">USD</div>
<div class="a" style="left:214.80px;top:509.17px;font-size:7.0px;line-height:7.0px;color:#666;font-weight:normal;">3</div>
<div class="a" style="left:231.60px;top:509.17px;font-size:7.0px;line-height:7.0px;color:#4a4a4a;font-weight:normal;-webkit-text-stroke:.06px #4a4a4a">transfer in</div>
<div class="a" style="left:281.60px;top:509.17px;font-size:7.0px;line-height:7.0px;color:#4a4a4a;font-weight:normal;-webkit-text-stroke:.06px #4a4a4a">approved</div>
<div class="a" style="left:456.70px;top:509.17px;font-size:7.0px;line-height:7.0px;color:#4a4a4a;font-weight:normal;-webkit-text-stroke:.06px #4a4a4a">2026-04-14T11:42:26+03:00</div>
<div class="a" style="left:562.90px;top:509.17px;font-size:7.0px;line-height:7.0px;color:#4a4a4a;font-weight:normal;-webkit-text-stroke:.06px #4a4a4a">2026-04-14T11:42:26+03:00</div>
<div class="a" style="left:668.00px;top:508.84px;font-size:7.4px;line-height:7.4px;color:#4a4a4a;font-weight:normal;-webkit-text-stroke:.06px #4a4a4a">7980.4000000000</div>
<div class="a" style="left:744.90px;top:509.17px;font-size:7.0px;line-height:7.0px;color:#4a4a4a;font-weight:normal;-webkit-text-stroke:.06px #4a4a4a">USD</div>
<div class="a" style="left:214.80px;top:533.27px;font-size:7.0px;line-height:7.0px;color:#666;font-weight:normal;">9</div>
<div class="a" style="left:231.60px;top:533.27px;font-size:7.0px;line-height:7.0px;color:#4a4a4a;font-weight:normal;-webkit-text-stroke:.06px #4a4a4a">psp fee</div>
<div class="a" style="left:281.60px;top:533.27px;font-size:7.0px;line-height:7.0px;color:#4a4a4a;font-weight:normal;-webkit-text-stroke:.06px #4a4a4a">declined</div>
<div class="a" style="left:324.10px;top:533.27px;font-size:7.0px;line-height:7.0px;color:#4a4a4a;font-weight:normal;-webkit-text-stroke:.06px #4a4a4a">ADVCash</div>
<div class="a" style="left:456.70px;top:533.27px;font-size:7.0px;line-height:7.0px;color:#4a4a4a;font-weight:normal;-webkit-text-stroke:.06px #4a4a4a">2026-04-10T10:50:14+03:00</div>
<div class="a" style="left:562.90px;top:533.27px;font-size:7.0px;line-height:7.0px;color:#4a4a4a;font-weight:normal;-webkit-text-stroke:.06px #4a4a4a">2026-04-10T10:50:14+03:00</div>
<div class="a" style="left:668.00px;top:532.94px;font-size:7.4px;line-height:7.4px;color:#4a4a4a;font-weight:normal;-webkit-text-stroke:.06px #4a4a4a">-5.0000000000</div>
<div class="a" style="left:744.90px;top:533.27px;font-size:7.0px;line-height:7.0px;color:#4a4a4a;font-weight:normal;-webkit-text-stroke:.06px #4a4a4a">USD</div>
<div class="a" style="left:214.80px;top:557.17px;font-size:7.0px;line-height:7.0px;color:#666;font-weight:normal;">8</div>
<div class="a" style="left:231.60px;top:557.17px;font-size:7.0px;line-height:7.0px;color:#4a4a4a;font-weight:normal;-webkit-text-stroke:.06px #4a4a4a">withdrawal</div>
<div class="a" style="left:281.60px;top:557.17px;font-size:7.0px;line-height:7.0px;color:#4a4a4a;font-weight:normal;-webkit-text-stroke:.06px #4a4a4a">declined</div>
<div class="a" style="left:324.10px;top:557.17px;font-size:7.0px;line-height:7.0px;color:#4a4a4a;font-weight:normal;-webkit-text-stroke:.06px #4a4a4a">ADVCash</div>
<div class="a" style="left:456.70px;top:557.17px;font-size:7.0px;line-height:7.0px;color:#4a4a4a;font-weight:normal;-webkit-text-stroke:.06px #4a4a4a">2026-04-10T10:50:14+03:00</div>
<div class="a" style="left:562.90px;top:557.17px;font-size:7.0px;line-height:7.0px;color:#4a4a4a;font-weight:normal;-webkit-text-stroke:.06px #4a4a4a">2026-04-14T11:40:33+03:00</div>
<div class="a" style="left:668.00px;top:556.84px;font-size:7.4px;line-height:7.4px;color:#4a4a4a;font-weight:normal;-webkit-text-stroke:.06px #4a4a4a">-9403.4000000000</div>
<div class="a" style="left:744.90px;top:557.17px;font-size:7.0px;line-height:7.0px;color:#4a4a4a;font-weight:normal;-webkit-text-stroke:.06px #4a4a4a">USD</div>
<div class="a" style="left:813.80px;top:557.17px;font-size:7.0px;line-height:7.0px;color:#4a4a4a;font-weight:normal;-webkit-text-stroke:.06px #4a4a4a">T&amp;Cs</div>
<div class="a" style="left:231.60px;top:581.17px;font-size:7.0px;line-height:7.0px;color:#4a4a4a;font-weight:normal;-webkit-text-stroke:.06px #4a4a4a">transfer</div>
<div class="a" style="left:231.60px;top:591.77px;font-size:7.0px;line-height:7.0px;color:#4a4a4a;font-weight:normal;-webkit-text-stroke:.06px #4a4a4a">out</div>
<div class="a" style="left:281.60px;top:586.47px;font-size:7.0px;line-height:7.0px;color:#4a4a4a;font-weight:normal;-webkit-text-stroke:.06px #4a4a4a">approved</div>
<div class="a" style="left:456.70px;top:581.17px;font-size:7.0px;line-height:7.0px;color:#4a4a4a;font-weight:normal;-webkit-text-stroke:.06px #4a4a4a">2026-04-</div>
<div class="a" style="left:456.70px;top:591.77px;font-size:7.0px;line-height:7.0px;color:#4a4a4a;font-weight:normal;-webkit-text-stroke:.06px #4a4a4a">08T21:34:08+03:00</div>
<div class="a" style="left:562.90px;top:581.17px;font-size:7.0px;line-height:7.0px;color:#4a4a4a;font-weight:normal;-webkit-text-stroke:.06px #4a4a4a">2026-04-</div>
<div class="a" style="left:562.90px;top:591.77px;font-size:7.0px;line-height:7.0px;color:#4a4a4a;font-weight:normal;-webkit-text-stroke:.06px #4a4a4a">08T21:34:08+03:00</div>
<div class="a" style="left:668.00px;top:586.14px;font-size:7.4px;line-height:7.4px;color:#4a4a4a;font-weight:normal;-webkit-text-stroke:.06px #4a4a4a">-8411.4000000000</div>
<div class="a" style="left:744.90px;top:586.47px;font-size:7.0px;line-height:7.0px;color:#4a4a4a;font-weight:normal;-webkit-text-stroke:.06px #4a4a4a">USD</div>
<div class="a" style="left:921.5px;top:344px;width:1.5px;height:20px;background:#d3d5da"></div>
<div class="a" style="left:894.3px;top:568px;width:25.4px;height:25.4px;border-radius:50%;background:#50b993;box-shadow:0 1px 3px rgba(0,0,0,.1)"></div>
<svg class="a" style="left:900.5px;top:574.5px;" width="13" height="13" viewBox="0 0 13 13"><path d="M3.3 1.6 L9.8 1.6 Q11.6 1.6 11.6 3.4 L11.6 7.6 Q11.6 9.4 9.8 9.4 L6.6 9.4 L4.6 11.2 L4.6 9.4 L3.3 9.4 Q1.5 9.4 1.5 7.6 L1.5 3.4 Q1.5 1.6 3.3 1.6Z" fill="none" stroke="#111" stroke-width="1.75" stroke-linejoin="round"/></svg>
</body></html>
